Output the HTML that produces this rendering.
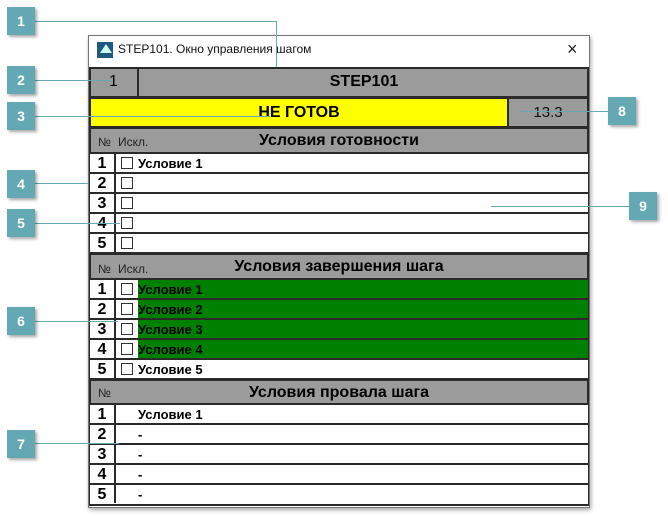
<!DOCTYPE html>
<html><head><meta charset="utf-8"><style>
*{margin:0;padding:0;box-sizing:border-box}
body{width:668px;height:516px;background:#fff;position:relative;overflow:hidden;font-family:"Liberation Sans",Arial,sans-serif}
.a{position:absolute}
.win{left:88px;top:35px;width:502px;height:473px;background:#fff;border:1px solid #777;box-shadow:1px 2px 4px rgba(0,0,0,.35)}
.gray{background:#9b9b9b}
.row{position:absolute;left:89px;width:500px;height:20px;border:1px solid #2a2a2a;background:#fff}
.num{position:absolute;left:0;top:0;width:26px;height:18px;border-right:2px solid #2a2a2a;font-weight:bold;font-size:16px;text-align:center;line-height:20px}
.cb{position:absolute;left:31px;top:3px;width:12px;height:12px;border:1px solid #333;background:#fff}
.tx{position:absolute;left:48px;top:1px;line-height:18px;font-weight:bold;font-size:13px}
.grn{position:absolute;left:48px;top:0;right:0;height:18px;background:#008000}
.hd{position:absolute;left:89px;width:500px;border:2px solid #2a2a2a;background:#9b9b9b}
.hd .n{position:absolute;left:7px;font-size:12px;color:#222}
.hd .i{position:absolute;left:27px;font-size:12px;color:#222}
.hd .t{position:absolute;left:0;right:0;text-align:center;font-weight:bold;font-size:16px}
.c{position:absolute;width:28px;height:28px;background:#64a8b4;color:#fff;font-weight:bold;font-size:14px;text-align:center;line-height:28px;box-shadow:2px 2px 3px rgba(0,0,0,.35)}
.l{position:absolute;background:#64a8b4}
</style></head><body>
<div class="a win"></div>
<div class="a" style="left:97px;top:42px;width:16px;height:16px;background:#1d5a80"></div>
<div class="a" style="left:100px;top:44px;width:0;height:0;border-left:6px solid transparent;border-right:6px solid transparent;border-bottom:9px solid #cfe"></div>
<div class="a" style="left:118px;top:42px;font-size:12px;color:#111">STEP101. Окно управления шагом</div>
<div class="a" style="left:567px;top:39px;font-size:18px;color:#222">×</div>

<div class="a gray" style="left:89px;top:67px;width:500px;height:31px;border:2px solid #2a2a2a"></div>
<div class="a" style="left:137px;top:67px;width:2px;height:31px;background:#2a2a2a"></div>
<div class="a" style="left:89px;top:73px;width:49px;text-align:center;font-size:16px">1</div>
<div class="a" style="left:139px;top:73px;width:450px;text-align:center;font-size:16px;font-weight:bold">STEP101</div>

<div class="a" style="left:89px;top:97px;width:420px;height:31px;background:#ff0;border:2px solid #2a2a2a"></div>
<div class="a gray" style="left:507px;top:97px;width:82px;height:31px;border:2px solid #2a2a2a"></div>
<div class="a" style="left:89px;top:104px;width:420px;text-align:center;font-size:16px;font-weight:bold">НЕ ГОТОВ</div>
<div class="a" style="left:507px;top:104px;width:82px;text-align:center;font-size:15px;color:#111">13.3</div>

<div class="hd" style="top:127px;height:27px"><span class="n" style="top:6px">№</span><span class="i" style="top:6px">Искл.</span><div class="t" style="top:3px">Условия готовности</div></div>
<div class="row" style="top:153px"><div class="num">1</div><div class="cb"></div><div class="tx">Условие 1</div></div>
<div class="row" style="top:173px"><div class="num">2</div><div class="cb"></div></div>
<div class="row" style="top:193px"><div class="num">3</div><div class="cb"></div></div>
<div class="row" style="top:213px"><div class="num">4</div><div class="cb"></div></div>
<div class="row" style="top:233px"><div class="num">5</div><div class="cb"></div></div>

<div class="hd" style="top:253px;height:27px"><span class="n" style="top:7px">№</span><span class="i" style="top:7px">Искл.</span><div class="t" style="top:3px">Условия завершения шага</div></div>
<div class="row" style="top:279px"><div class="num">1</div><div class="cb"></div><div class="grn"></div><div class="tx">Условие 1</div></div>
<div class="row" style="top:299px"><div class="num">2</div><div class="cb"></div><div class="grn"></div><div class="tx">Условие 2</div></div>
<div class="row" style="top:319px"><div class="num">3</div><div class="cb"></div><div class="grn"></div><div class="tx">Условие 3</div></div>
<div class="row" style="top:339px"><div class="num">4</div><div class="cb"></div><div class="grn"></div><div class="tx">Условие 4</div></div>
<div class="row" style="top:359px"><div class="num">5</div><div class="cb"></div><div class="tx">Условие 5</div></div>

<div class="hd" style="top:379px;height:26px"><span class="n" style="top:5px">№</span><div class="t" style="top:3px">Условия провала шага</div></div>
<div class="row" style="top:404px"><div class="num">1</div><div class="tx">Условие 1</div></div>
<div class="row" style="top:424px"><div class="num">2</div><div class="tx">-</div></div>
<div class="row" style="top:444px"><div class="num">3</div><div class="tx">-</div></div>
<div class="row" style="top:464px"><div class="num">4</div><div class="tx">-</div></div>
<div class="row" style="top:484px;height:22px;border-bottom:2px solid #2a2a2a"><div class="num">5</div><div class="tx">-</div></div>

<div class="l" style="left:35px;top:21px;width:242px;height:1px"></div>
<div class="l" style="left:276px;top:21px;width:1px;height:46px"></div>
<div class="l" style="left:35px;top:80px;width:78px;height:1px"></div>
<div class="l" style="left:35px;top:116px;width:235px;height:1px"></div>
<div class="l" style="left:35px;top:183px;width:53px;height:1px"></div>
<div class="l" style="left:35px;top:223px;width:85px;height:1px"></div>
<div class="l" style="left:35px;top:321px;width:83px;height:1px"></div>
<div class="l" style="left:35px;top:443px;width:84px;height:1px"></div>
<div class="l" style="left:520px;top:111px;width:88px;height:1px"></div>
<div class="l" style="left:491px;top:206px;width:138px;height:1px"></div>

<div class="c" style="left:7px;top:7px">1</div>
<div class="c" style="left:7px;top:66px">2</div>
<div class="c" style="left:7px;top:102px">3</div>
<div class="c" style="left:7px;top:170px">4</div>
<div class="c" style="left:7px;top:209px">5</div>
<div class="c" style="left:7px;top:307px">6</div>
<div class="c" style="left:7px;top:430px">7</div>
<div class="c" style="left:608px;top:97px">8</div>
<div class="c" style="left:629px;top:192px">9</div>
</body></html>
